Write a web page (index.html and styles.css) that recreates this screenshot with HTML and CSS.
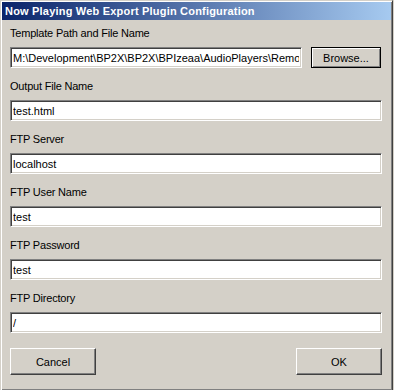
FILE: index.html
```html
<!DOCTYPE html>
<html>
<head>
    <meta charset="UTF-8" />
    <title>Now Playing Web Export Plugin Configuration</title>
    <link rel="stylesheet" href="styles.css">
</head>
<body>
    <div class="window">
        <div class="title-bar">Now Playing Web Export Plugin Configuration</div>
        <div class="content">
            <div class="field">
                <label>Template Path and File Name</label>
                <div class="row">
                    <input type="text" class="path" value="M:\Development\BP2X\BP2X\BPIzeaa\AudioPlayers\RemoteControl\template.html">
                    <button class="browse">Browse...</button>
                </div>
            </div>
            <div class="field">
                <label>Output File Name</label>
                <input type="text" value="test.html">
            </div>
            <div class="field">
                <label>FTP Server</label>
                <input type="text" value="localhost">
            </div>
            <div class="field">
                <label>FTP User Name</label>
                <input type="text" value="test">
            </div>
            <div class="field">
                <label>FTP Password</label>
                <input type="text" value="test">
            </div>
            <div class="field">
                <label>FTP Directory</label>
                <input type="text" value="/">
            </div>
            <div class="buttons">
                <button>Cancel</button>
                <button>OK</button>
            </div>
        </div>
    </div>
</body>
</html>
```
FILE: styles.css
```css
body {
    margin: 0;
    background-color: #d4d0c8;
    font-family: "Liberation Sans", Arial, sans-serif;
    font-size: 11px;
    color: #000;
}
.window {
    width: 389px;
    height: 387px;
    border-top: 1px solid #d4d0c8;
    border-left: 1px solid #d4d0c8;
    border-right: 1px solid #404040;
    border-bottom: 1px solid #404040;
    box-shadow: inset 1px 1px #fff, inset -1px -1px #808080;
    padding: 1px;
    box-sizing: content-box;
}
.title-bar {
    height: 18px;
    line-height: 18px;
    padding-left: 3px;
    color: #fff;
    font-weight: bold;
    letter-spacing: 0.2px;
    background: linear-gradient(to right, #0a246a, #a6caf0);
}
.content {
    display: flex;
    flex-direction: column;
    gap: 12px;
    padding: 7px 9px 0 8px;
}
.field label {
    display: block;
    line-height: 13px;
    margin-bottom: 7px;
    letter-spacing: -0.2px;
}
.row {
    display: flex;
    gap: 9px;
}
input {
    display: block;
    box-sizing: border-box;
    width: 372px;
    height: 21px;
    margin: 0;
    padding: 0 2px;
    font-family: "Liberation Sans", Arial, sans-serif;
    font-size: 11px;
    color: #000;
    background: #fff;
    border-top: 1px solid #808080;
    border-left: 1px solid #808080;
    border-right: 1px solid #fff;
    border-bottom: 1px solid #fff;
    box-shadow: inset 1px 1px #404040, inset -1px -1px #d4d0c8;
    outline: none;
}
input.path {
    width: 292px;
}
button {
    box-sizing: border-box;
    width: 86px;
    height: 27px;
    margin: 0;
    padding: 0;
    font-family: "Liberation Sans", Arial, sans-serif;
    font-size: 11px;
    color: #000;
    background: #d4d0c8;
    border-top: 1px solid #fff;
    border-left: 1px solid #fff;
    border-right: 1px solid #404040;
    border-bottom: 1px solid #404040;
    box-shadow: inset -1px -1px #808080;
}
button.browse {
    width: 70px;
    height: 21px;
    border: 1px solid #000;
    box-shadow: inset 1px 1px #fff, inset -1px -1px #808080;
}
.buttons {
    display: flex;
    justify-content: space-between;
    padding-top: 3px;
}
```
